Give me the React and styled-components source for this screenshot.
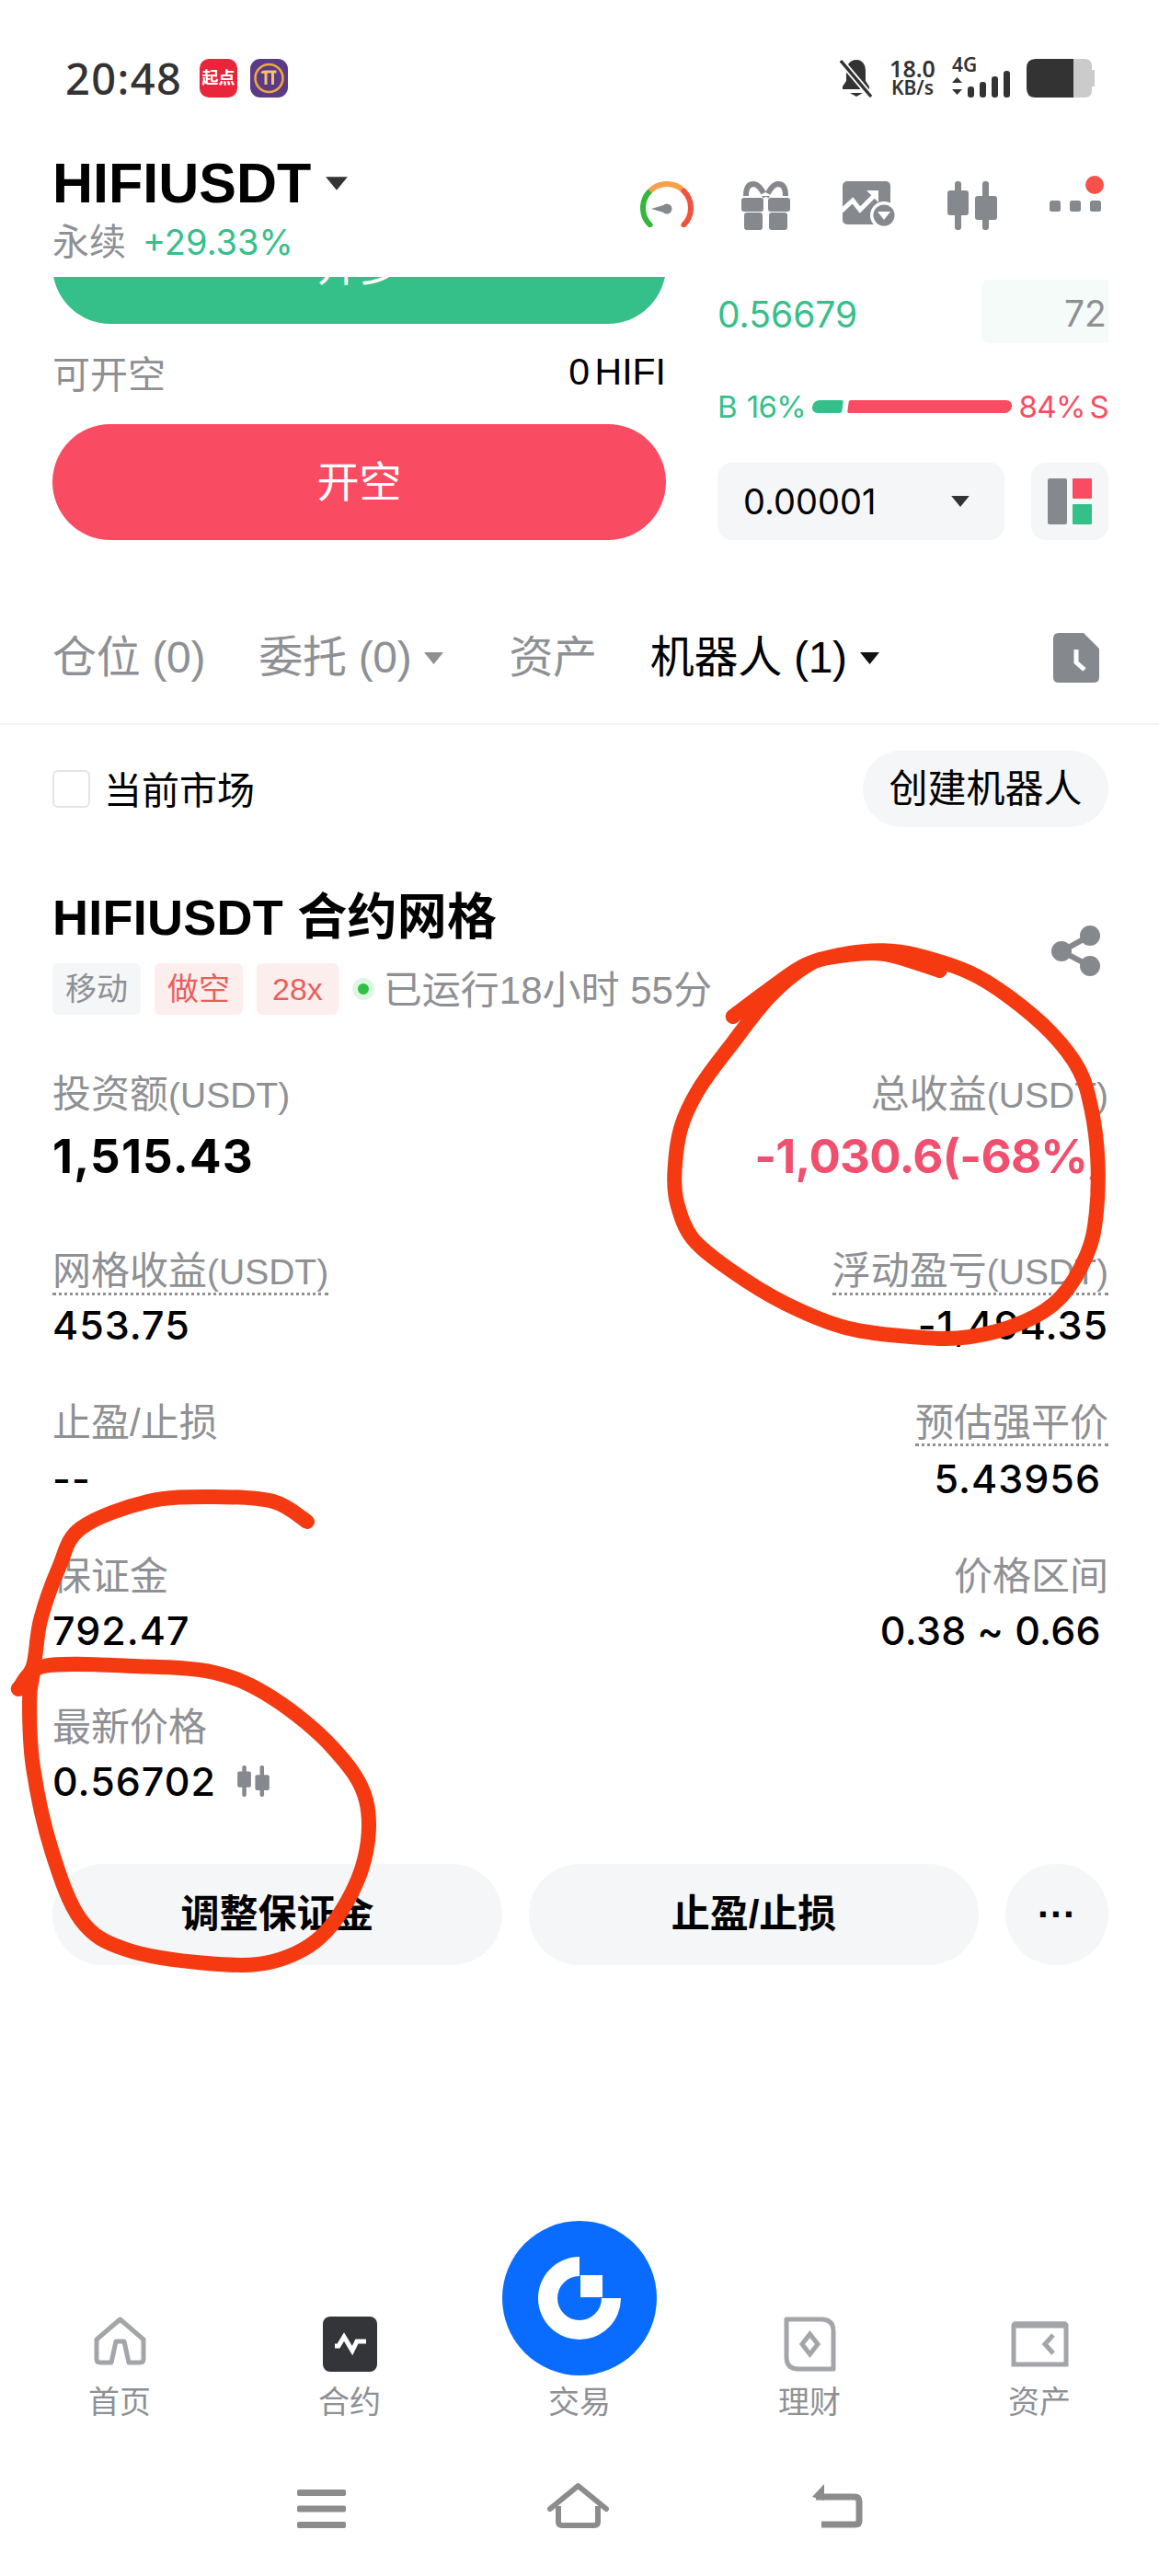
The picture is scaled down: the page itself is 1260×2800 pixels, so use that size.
import React from "react";
import styled, { createGlobalStyle } from "styled-components";

const SANS = `"Liberation Sans", "Noto Sans CJK SC", sans-serif`;
const NUM = `Inter, "Noto Sans CJK SC", sans-serif`;
const GRAY = "#85888d";
const LABEL = "#8e9094";
const GREEN = "#35c08a";
const RED = "#f94c62";
const SOFT = "#f5f6f7";

const Global = createGlobalStyle`
  html, body { margin: 0; padding: 0; background: #fff; }
  * { box-sizing: border-box; }
`;

const Page = styled.div`
  position: relative;
  width: 1260px;
  height: 2800px;
  overflow: hidden;
  background: #fff;
  font-family: ${SANS};
  color: #000;
`;

/* status bar */
const StatusBar = styled.div`
  height: 120px;
  padding: 64px 70px 0 71px;
  display: flex;
  justify-content: space-between;
  align-items: flex-start;
`;
const StatusGroup = styled.div`
  display: flex;
  align-items: flex-start;
  gap: ${(p) => p.$gap}px;
`;
const Clock = styled.div`
  font-family: "Noto Sans", sans-serif;
  font-size: 47px;
  line-height: 42px;
  font-weight: 500;
  letter-spacing: 1.4px;
  color: #333;
  margin-right: 6px;
  width: 126px;
`;
const AppBadge = styled.div`
  width: 41px;
  height: 42px;
  border-radius: 10px;
  background: #e8253a;
  color: #fff;
  font-size: 18px;
  font-weight: 700;
  line-height: 42px;
  text-align: center;
  white-space: nowrap;
  overflow: hidden;
`;
const NetSpeed = styled.div`
  font-family: "Noto Sans", sans-serif;
  font-weight: 600;
  color: #333;
  width: 52px;
  text-align: center;
`;
const NetLine = styled.div`
  font-size: ${(p) => p.$size}px;
  line-height: 21px;
`;
const Signal = styled.div`
  width: 64px;
  font-family: "Noto Sans", sans-serif;
  font-weight: 600;
  font-size: 21px;
  line-height: 13px;
  color: #333;
`;
const SignalBars = styled.svg`
  display: block;
`;

/* header */
const Header = styled.div`
  height: 181px;
  padding: 0 60px 0 57px;
  display: flex;
  justify-content: space-between;
  align-items: flex-start;
`;
const TitleBlock = styled.div`
  padding-top: 49px;
`;
const PairRow = styled.div`
  display: flex;
  align-items: center;
  gap: 15px;
  font-size: 61px;
  line-height: 60px;
  font-weight: 700;
`;
const SubRow = styled.div`
  display: flex;
  align-items: center;
  gap: 18px;
  margin-top: 9px;
  font-size: 40px;
  line-height: 50px;
  color: ${LABEL};
`;
const Change = styled.span`
  font-family: ${NUM};
  font-size: 38px;
  color: ${GREEN};
`;
const HeaderIcons = styled.div`
  display: flex;
  align-items: flex-start;
  gap: 57px;
  padding-top: 77px;
`;
const GaugeIcon = styled.svg`
  margin-right: -5px;
`;
const MoreIcon = styled.svg`
  margin-top: -6px;
`;

/* trade */
const Trade = styled.div`
  padding: 0 55px 0 57px;
  display: grid;
  grid-template-columns: 667px 425px;
  justify-content: space-between;
`;
const Column = styled.div`
  display: flex;
  flex-direction: column;
`;
const ClippedBuy = styled.div`
  height: 51px;
  overflow: hidden;
  display: flex;
  align-items: flex-end;
`;
const Action = styled.div`
  flex: none;
  width: 100%;
  height: 126px;
  border-radius: 63px;
  background: ${(p) => p.$color};
  color: #fff;
  font-size: 46px;
  line-height: 126px;
  text-align: center;
`;
const AvailRow = styled.div`
  height: 109px;
  padding-bottom: 5px;
  display: flex;
  justify-content: space-between;
  align-items: center;
  font-size: 41px;
  color: ${LABEL};
`;
const AvailValue = styled.span`
  font-size: 41px;
  word-spacing: -6px;
  color: #000;
`;
const DepthRow = styled.div`
  height: 75px;
  padding-top: 6px;
  display: flex;
  justify-content: space-between;
  align-items: center;
  font-family: ${NUM};
  font-size: 39px;
  color: ${GREEN};
`;
const DepthBox = styled.div`
  width: 138px;
  height: 69px;
  margin-top: -6px;
  padding: 4px 0 0 90px;
  background: #f5fbf8;
  border-radius: 8px 0 0 8px;
  color: ${LABEL};
  overflow: hidden;
  display: flex;
  align-items: center;
  white-space: nowrap;
`;
const Ratio = styled.div`
  height: 127px;
  padding-top: 4px;
  display: flex;
  align-items: center;
  justify-content: space-between;
  font-family: ${NUM};
  font-size: 33px;
  letter-spacing: -0.6px;
`;
const RatioText = styled.span`
  color: ${(p) => p.$color};
  white-space: nowrap;
  word-spacing: ${(p) => p.$word ?? 0}px;
`;
const RatioBar = styled.div`
  display: flex;
  gap: 6px;
`;
const RatioPart = styled.div`
  height: 14px;
  width: ${(p) => p.$width}px;
  background: ${(p) => p.$color};
  border-radius: ${(p) => p.$radius};
  transform: skewX(-8deg);
`;
const DepthTools = styled.div`
  display: flex;
  justify-content: space-between;
`;
const Select = styled.div`
  width: 312px;
  height: 84px;
  padding: 0 37px 0 28px;
  background: ${SOFT};
  border-radius: 16px;
  display: flex;
  justify-content: space-between;
  align-items: center;
  font-family: ${NUM};
  font-size: 38px;
`;
const LayoutButton = styled.div`
  width: 84px;
  height: 84px;
  background: ${SOFT};
  border-radius: 16px;
  display: flex;
  justify-content: center;
  align-items: center;
`;

/* tabs */
const Tabs = styled.div`
  margin-top: 90px;
  height: 111px;
  padding: 0 65px 33px 57px;
  display: flex;
  align-items: center;
  gap: 58px;
  border-bottom: 2px solid #f2f3f4;
`;
const Tab = styled.div`
  display: flex;
  align-items: center;
  gap: 13px;
  font-size: 48px;
  letter-spacing: -0.3px;
  line-height: 76px;
  white-space: nowrap;
  color: ${(p) => (p.$active ? "#000" : LABEL)};
`;
const TabEnd = styled.div`
  margin-left: auto;
  display: flex;
`;
const CaretIcon = styled.svg`
  flex: none;
  margin-right: ${(p) => p.$mr ?? 0}px;
`;

/* market row */
const MarketRow = styled.div`
  margin-top: 28px;
  padding: 0 55px 0 57px;
  display: flex;
  justify-content: space-between;
  align-items: center;
`;
const CheckWrap = styled.div`
  display: flex;
  align-items: center;
  gap: 15px;
  font-size: 41px;
`;
const CheckText = styled.span`
  margin-bottom: 4px;
`;
const Check = styled.div`
  width: 41px;
  height: 41px;
  border: 2.5px solid #e4e5e7;
  border-radius: 6px;
`;
const Pill = styled.div`
  width: 267px;
  height: 83px;
  border-radius: 42px;
  background: ${SOFT};
  font-size: 42px;
  line-height: 83px;
  text-align: center;
`;

/* bot card */
const Bot = styled.div`
  padding: 65px 55px 0 57px;
`;
const BotHead = styled.div`
  display: flex;
  justify-content: space-between;
  align-items: center;
  padding-right: 9px;
`;
const BotTitle = styled.div`
  font-size: 54px;
  line-height: 66px;
  font-weight: 700;
  letter-spacing: 0.25px;
`;
const Tags = styled.div`
  margin-top: 12px;
  display: flex;
  align-items: center;
  gap: 15px;
`;
const Tag = styled.div`
  height: 56px;
  padding: 0 ${(p) => p.$pad}px;
  border-radius: 6px;
  background: ${(p) => p.$bg};
  color: ${(p) => p.$color};
  font-size: 34px;
  line-height: 56px;
  white-space: nowrap;
`;
const Running = styled.div`
  display: flex;
  align-items: center;
  gap: 10px;
  font-size: 42px;
  color: ${LABEL};
  white-space: nowrap;
`;
const RunningText = styled.span`
  margin-bottom: 4px;
`;
const Dot = styled.div`
  width: 24px;
  height: 24px;
  border-radius: 50%;
  background: #2fbf43;
  border: 6px solid #dff5e4;
`;
const ShareIcon = styled.svg`
  margin-bottom: 4px;
`;
const Metrics = styled.div`
  margin-top: 61px;
  display: grid;
  grid-template-columns: 1fr 1fr;
  grid-template-rows: 192px 165px 167px 164px 170px;
`;
const Metric = styled.div`
  display: flex;
  flex-direction: column;
  align-items: ${(p) => (p.$right ? "flex-end" : "flex-start")};
`;
const Label = styled.div`
  font-size: 42px;
  line-height: 44px;
  color: ${LABEL};
  white-space: nowrap;
  ${(p) => p.$tip && `border-bottom: 3px dotted ${LABEL};`}
`;
const Unit = styled.span`
  font-size: 39px;
`;
const Value = styled.div`
  margin-top: ${(p) => p.$gap ?? 6}px;
  padding-right: ${(p) => p.$inset ?? 0}px;
  display: flex;
  align-items: center;
  gap: 22px;
  font-family: ${NUM};
  font-size: ${(p) => (p.$big ? 51 : 43)}px;
  font-weight: ${(p) => (p.$big ? 700 : 500)};
  letter-spacing: ${(p) => p.$track ?? (p.$big ? 1.2 : 1)}px;
  line-height: 60px;
  color: ${(p) => p.$color || "#000"};
  white-space: nowrap;
`;
const Buttons = styled.div`
  display: grid;
  grid-template-columns: 489px 489px 112px;
  justify-content: space-between;
`;
const BotButton = styled.div`
  height: 110px;
  border-radius: 55px;
  background: ${SOFT};
  font-size: 42px;
  font-weight: 700;
  line-height: 110px;
  text-align: center;
`;

/* nav */
const Nav = styled.div`
  position: absolute;
  left: 5px;
  right: 5px;
  top: 2414px;
  display: grid;
  grid-template-columns: repeat(5, 250px);
  height: 216px;
`;
const NavItem = styled.div`
  display: flex;
  flex-direction: column;
  align-items: center;
  justify-content: flex-end;
  font-size: 34px;
  line-height: 40px;
  color: ${LABEL};
`;
const NavIcon = styled.div`
  display: flex;
  align-items: flex-end;
  justify-content: center;
  margin-bottom: ${(p) => p.$mb ?? 13}px;
`;
const SystemNav = styled.div`
  position: absolute;
  left: 0;
  right: 0;
  top: 2698px;
  display: flex;
  justify-content: center;
  align-items: flex-end;
  gap: 219px;
  height: 50px;
`;
const Annotation = styled.svg`
  position: absolute;
  left: 0;
  top: 0;
  pointer-events: none;
`;

const Caret = ({ color = "#333", w = 23, h = 15, mr = 0 }) => (
  <CaretIcon width={w} height={h} viewBox="0 0 23 15" $mr={mr}>
    <path d="M1 1H22L11.5 14Z" fill={color} />
  </CaretIcon>
);
const Candles = ({ w = 54, h = 53 }) => (
  <svg width={w} height={h} viewBox="0 0 54 53" fill={GRAY}>
    <rect x="8" y="0" width="7" height="53" rx="3" />
    <rect x="0" y="10" width="23" height="27" rx="3" />
    <rect x="38" y="0" width="7" height="53" rx="3" />
    <rect x="30" y="16" width="24" height="26" rx="3" />
  </svg>
);

/* Smooth pen stroke through the hand-drawn points */
const smooth = (pts) => {
  let d = `M${pts[0][0]} ${pts[0][1]}`;
  for (let i = 0; i < pts.length - 1; i++) {
    const p0 = pts[i - 1] || pts[i];
    const p1 = pts[i];
    const p2 = pts[i + 1];
    const p3 = pts[i + 2] || p2;
    const c1x = p1[0] + (p2[0] - p0[0]) / 6;
    const c1y = p1[1] + (p2[1] - p0[1]) / 6;
    const c2x = p2[0] - (p3[0] - p1[0]) / 6;
    const c2y = p2[1] - (p3[1] - p1[1]) / 6;
    d += `C${c1x.toFixed(1)} ${c1y.toFixed(1)} ${c2x.toFixed(1)} ${c2y.toFixed(1)} ${p2[0].toFixed(1)} ${p2[1].toFixed(1)}`;
  }
  return d;
};
const RIGHT_LOOP = smooth(
  [[230,255],[350,165],[470,85],[600,50],[720,40],[830,55],[1000,110],[1130,190],[1270,310],[1360,430],[1400,560],[1420,720],[1415,900],[1385,1030],[1300,1170],[1180,1250],[1000,1300],[820,1300],[600,1270],[400,1190],[220,1080],[100,980],[50,870],[40,770],[60,620],[120,490],[230,340],[350,190],[470,90],[560,60],[720,50],[905,105]]
    .map(([x, y]) => [720 + x / 3, 1020 + y / 3])
);
const LEFT_LOOP = smooth([[334,1654],[297,1632],[233,1627],[161,1632],[88,1661],[64,1704],[44,1761],[36,1811],[20,1836],[48,1811],[145,1811],[233,1818],[297,1846],[362,1900],[398,1957],[394,2029],[354,2100],[297,2132],[225,2134],[137,2119],[88,2087],[56,2011],[36,1921],[32,1850],[36,1818]]);

export default function App() {
  return (
    <Page>
      <Global />
      <StatusBar>
        <StatusGroup $gap={14}>
          <Clock>20:48</Clock>
          <AppBadge>起点</AppBadge>
          <svg width="41" height="42" viewBox="0 0 41 42">
            <rect width="41" height="42" rx="11" fill="#5b3a86" />
            <circle cx="20.5" cy="21" r="15" fill="none" stroke="#eeaa3d" strokeWidth="2.6" />
            <path d="M12.5 15.5c1 -1.5 2 -1.5 3.5 -1.5h12.5M17 14.5V28M24.5 14.5V28" stroke="#f3c26a" strokeWidth="3" fill="none" />
          </svg>
        </StatusGroup>
        <StatusGroup $gap={17}>
          <svg width="36" height="42" viewBox="0 0 36 42" fill="#333">
            <path d="M18 1c7 0 10 6 10 12v11l4 6v3H3v-3l4-6V13C7 7 11 1 18 1Z" />
            <path d="M11 37h14l-7 4Z" />
            <path d="M1 2L34 41" stroke="#fff" strokeWidth="7" />
            <path d="M1 2L34 41" stroke="#333" strokeWidth="3.4" />
          </svg>
          <NetSpeed>
            <NetLine $size={25}>18.0</NetLine>
            <NetLine $size={21}>KB/s</NetLine>
          </NetSpeed>
          <Signal>
            4G
            <SignalBars width="64" height="29" viewBox="0 0 64 29" fill="#333">
              <path d="M0 10L5.5 4L11 10ZM0 17H11L5.5 23Z" transform="translate(0,3)" />
              <rect x="17" y="17" width="7" height="12" rx="3" />
              <rect x="30" y="12" width="7" height="17" rx="3" />
              <rect x="43" y="6" width="7" height="23" rx="3" />
              <rect x="56" y="0" width="7" height="29" rx="3" />
            </SignalBars>
          </Signal>
          <svg width="74" height="42" viewBox="0 0 74 42">
            <path d="M51 0h12q8 0 8 8v4h3v18h-3v4q0 8-8 8H51Z" fill="#cbcbcb" />
            <path d="M51 0H10Q0 0 0 10v22q0 10 10 10h41Z" fill="#333" />
          </svg>
        </StatusGroup>
      </StatusBar>

      <Header>
        <TitleBlock>
          <PairRow>
            HIFIUSDT
            <Caret w={26} h={17} />
          </PairRow>
          <SubRow>
            永续
            <Change>+29.33%</Change>
          </SubRow>
        </TitleBlock>
        <HeaderIcons>
          <GaugeIcon width="58" height="50" viewBox="0 0 58 50" fill="none" strokeWidth="6" strokeLinecap="round">
            <path d="M10.6 47.4A26 26 0 0 1 10.6 10.6" stroke="#35b53b" />
            <path d="M10.6 10.6A26 26 0 0 1 47.4 10.6" stroke="#f7a04a" strokeLinecap="butt" />
            <path d="M47.4 10.6A26 26 0 0 1 47.4 47.4" stroke="#f0523d" />
            <path d="M12 30L29 25V35Z" fill={GRAY} />
            <circle cx="29" cy="30" r="5.5" fill={GRAY} />
          </GaugeIcon>
          <svg width="53" height="53" viewBox="0 0 53 53" fill={GRAY}>
            <path d="M26 17C22 8 18 3 13 3C7 3 5 8 5 16M27 17C31 8 35 3 40 3C46 3 48 8 48 16" fill="none" stroke={GRAY} strokeWidth="6" />
            <path d="M18 16L26 12L34 16Z" fill="#fff" />
            <rect x="0" y="18" width="24" height="15" rx="3" />
            <rect x="29" y="18" width="24" height="15" rx="3" />
            <rect x="3" y="34" width="20" height="19" rx="3" />
            <rect x="30" y="34" width="20" height="19" rx="3" />
          </svg>
          <svg width="57" height="50" viewBox="0 0 57 50">
            <rect x="0" y="0" width="52" height="47" rx="5" fill={GRAY} />
            <path d="M-2 33L11 21L19 31L37 13" fill="none" stroke="#fff" strokeWidth="5" />
            <path d="M26 10H39V23Z" fill="#fff" />
            <circle cx="45" cy="37" r="15" fill="#fff" />
            <circle cx="45" cy="37" r="11.5" fill={GRAY} />
            <path d="M38 33H52L45 42Z" fill="#fff" />
          </svg>
          <Candles />
          <MoreIcon width="59" height="43" viewBox="0 0 59 43" fill={GRAY}>
            <rect x="0" y="27" width="12" height="12" rx="2.5" />
            <rect x="22" y="27" width="12" height="12" rx="2.5" />
            <rect x="44" y="27" width="12" height="12" rx="2.5" />
            <circle cx="49" cy="10" r="10" fill="#f5524a" />
          </MoreIcon>
        </HeaderIcons>
      </Header>

      <Trade>
        <Column>
          <ClippedBuy>
            <Action $color={GREEN}>开多</Action>
          </ClippedBuy>
          <AvailRow>
            可开空
            <AvailValue>0 HIFI</AvailValue>
          </AvailRow>
          <Action $color={RED}>开空</Action>
        </Column>
        <Column>
          <DepthRow>
            0.56679
            <DepthBox>72.4</DepthBox>
          </DepthRow>
          <Ratio>
            <RatioText $color={GREEN} $word={2}>B 16%</RatioText>
            <RatioBar>
              <RatioPart $width={33} $color={GREEN} $radius="7px 2px 2px 7px" />
              <RatioPart $width={178} $color={RED} $radius="2px 7px 7px 2px" />
            </RatioBar>
            <RatioText $color={RED} $word={-4}>84% S</RatioText>
          </Ratio>
          <DepthTools>
            <Select>
              0.00001
              <Caret w={22} h={14} />
            </Select>
            <LayoutButton>
              <svg width="48" height="50" viewBox="0 0 48 50">
                <rect x="0" y="0" width="21" height="50" rx="2" fill={GRAY} />
                <rect x="27" y="0" width="21" height="22" rx="1" fill={RED} />
                <rect x="27" y="28" width="21" height="22" rx="1" fill={GREEN} />
              </svg>
            </LayoutButton>
          </DepthTools>
        </Column>
      </Trade>

      <Tabs>
        <Tab>仓位 (0)</Tab>
        <Tab>
          委托 (0)
          <Caret color={LABEL} mr={12} />
        </Tab>
        <Tab>资产</Tab>
        <Tab $active>
          机器人 (1)
          <Caret color="#111" />
        </Tab>
        <TabEnd>
          <svg width="50" height="54" viewBox="0 0 50 54">
            <path d="M6 0H33L50 17V48q0 6-6 6H6q-6 0-6-6V6q0-6 6-6Z" fill={GRAY} />
            <path d="M25 18V32L34 40" fill="none" stroke="#fff" strokeWidth="5" />
          </svg>
        </TabEnd>
      </Tabs>

      <MarketRow>
        <CheckWrap>
          <Check />
          <CheckText>当前市场</CheckText>
        </CheckWrap>
        <Pill>创建机器人</Pill>
      </MarketRow>

      <Bot>
        <BotHead>
          <div>
            <BotTitle>HIFIUSDT 合约网格</BotTitle>
            <Tags>
              <Tag $bg={SOFT} $color={LABEL} $pad={14}>移动</Tag>
              <Tag $bg="#fdeeee" $color="#e8605c" $pad={14}>做空</Tag>
              <Tag $bg="#fdeeee" $color="#e8605c" $pad={17}>28x</Tag>
              <Running>
                <Dot />
                <RunningText>已运行18小时 55分</RunningText>
              </Running>
            </Tags>
          </div>
          <ShareIcon width="53" height="55" viewBox="0 0 53 55" fill={GRAY}>
            <path d="M42 11L11 28L42 44" fill="none" stroke={GRAY} strokeWidth="6" />
            <circle cx="42" cy="11" r="11" />
            <circle cx="11" cy="28" r="11" />
            <circle cx="42" cy="44" r="11" />
          </ShareIcon>
        </BotHead>

        <Metrics>
          <Metric>
            <Label>投资额<Unit>(USDT)</Unit></Label>
            <Value $big $gap={14}>1,515.43</Value>
          </Metric>
          <Metric $right>
            <Label>总收益<Unit>(USDT)</Unit></Label>
            <Value $big $gap={14} $inset={4} $track={-0.7} $color="#f0506e">-1,030.6(-68%)</Value>
          </Metric>
          <Metric>
            <Label $tip>网格收益<Unit>(USDT)</Unit></Label>
            <Value $gap={2}>453.75</Value>
          </Metric>
          <Metric $right>
            <Label $tip>浮动盈亏<Unit>(USDT)</Unit></Label>
            <Value $gap={2}>-1,494.35</Value>
          </Metric>
          <Metric>
            <Label>止盈/止损</Label>
            <Value $gap={8}>--</Value>
          </Metric>
          <Metric $right>
            <Label $tip>预估强平价</Label>
            <Value $gap={5} $inset={8}>5.43956</Value>
          </Metric>
          <Metric>
            <Label>保证金</Label>
            <Value>792.47</Value>
          </Metric>
          <Metric $right>
            <Label>价格区间</Label>
            <Value $inset={8} $track={0.3}>0.38 ~ 0.66</Value>
          </Metric>
          <Metric>
            <Label>最新价格</Label>
            <Value>
              0.56702
              <Candles w={37} h={34} />
            </Value>
          </Metric>
        </Metrics>

        <Buttons>
          <BotButton>调整保证金</BotButton>
          <BotButton>止盈/止损</BotButton>
          <BotButton>···</BotButton>
        </Buttons>
      </Bot>

      <Nav>
        <NavItem>
          <NavIcon $mb={20}>
            <svg width="57" height="53" viewBox="0 0 57 53" fill="none" stroke="#a3a5a8" strokeWidth="5">
              <path d="M28.5 3L54 25V46Q54 50 50 50H38L33 27H24L19 50H7Q3 50 3 46V25Z" strokeLinejoin="round" />
            </svg>
          </NavIcon>
          首页
        </NavItem>
        <NavItem>
          <NavIcon>
            <svg width="59" height="60" viewBox="0 0 59 60">
              <rect width="59" height="60" rx="8" fill="#333539" />
              <path d="M13 32H17L23 22L32 37L37 27H47" fill="none" stroke="#fff" strokeWidth="5" />
            </svg>
          </NavIcon>
          合约
        </NavItem>
        <NavItem>
          <NavIcon $mb={9}>
            <svg width="168" height="168" viewBox="0 0 168 168">
              <circle cx="84" cy="84" r="84" fill="#0a6cff" />
              <path d="M84 39A45 45 0 1 0 129 84H108A24 24 0 1 1 84 60Z" fill="#fff" />
              <rect x="85" y="59" width="24" height="24" fill="#fff" />
            </svg>
          </NavIcon>
          交易
        </NavItem>
        <NavItem>
          <NavIcon>
            <svg width="57" height="60" viewBox="0 0 57 60" fill="none" stroke="#a3a5a8" strokeWidth="5">
              <path d="M3 3H41Q54 3 54 16V57H16Q3 57 3 44Z" strokeLinejoin="round" />
              <path d="M28.5 19L37 30L28.5 41L20 30Z" />
            </svg>
          </NavIcon>
          理财
        </NavItem>
        <NavItem>
          <NavIcon $mb={18}>
            <svg width="63" height="50" viewBox="0 0 63 50" fill="none" stroke="#a3a5a8" strokeWidth="5">
              <path d="M3 5Q3 3 5 3H58Q60 3 60 5V47H3Z" />
              <path d="M3 4H60" strokeWidth="7" />
              <path d="M46 15L37 25L46 35" strokeWidth="5" />
            </svg>
          </NavIcon>
          资产
        </NavItem>
      </Nav>

      <SystemNav>
        <svg width="53" height="42" viewBox="0 0 53 42" fill="#8c8c8c">
          <rect y="0" width="53" height="7" rx="2" />
          <rect y="17.5" width="53" height="7" rx="2" />
          <rect y="35" width="53" height="7" rx="2" />
        </svg>
        <svg width="67" height="50" viewBox="0 0 67 50" fill="none" stroke="#8c8c8c" strokeWidth="6">
          <path d="M3 29L33.5 4L64 29" strokeLinecap="round" strokeLinejoin="round" />
          <path d="M12 26V43Q12 47 16 47H51Q55 47 55 43V26" />
        </svg>
        <svg width="57" height="48" viewBox="0 0 57 48" fill="none" stroke="#8c8c8c" strokeWidth="7">
          <path d="M6 14H48Q53 14 53 19V40Q53 44 49 44H12" />
          <path d="M15 0L2 14L15 18Z" fill="#8c8c8c" stroke="none" />
        </svg>
      </SystemNav>

      <Annotation width="1260" height="2800" viewBox="0 0 1260 2800" fill="none" stroke="#f53a12" strokeWidth="16" strokeLinecap="round" strokeLinejoin="round">
        <path d={RIGHT_LOOP} />
        <path d={LEFT_LOOP} />
      </Annotation>
    </Page>
  );
}
